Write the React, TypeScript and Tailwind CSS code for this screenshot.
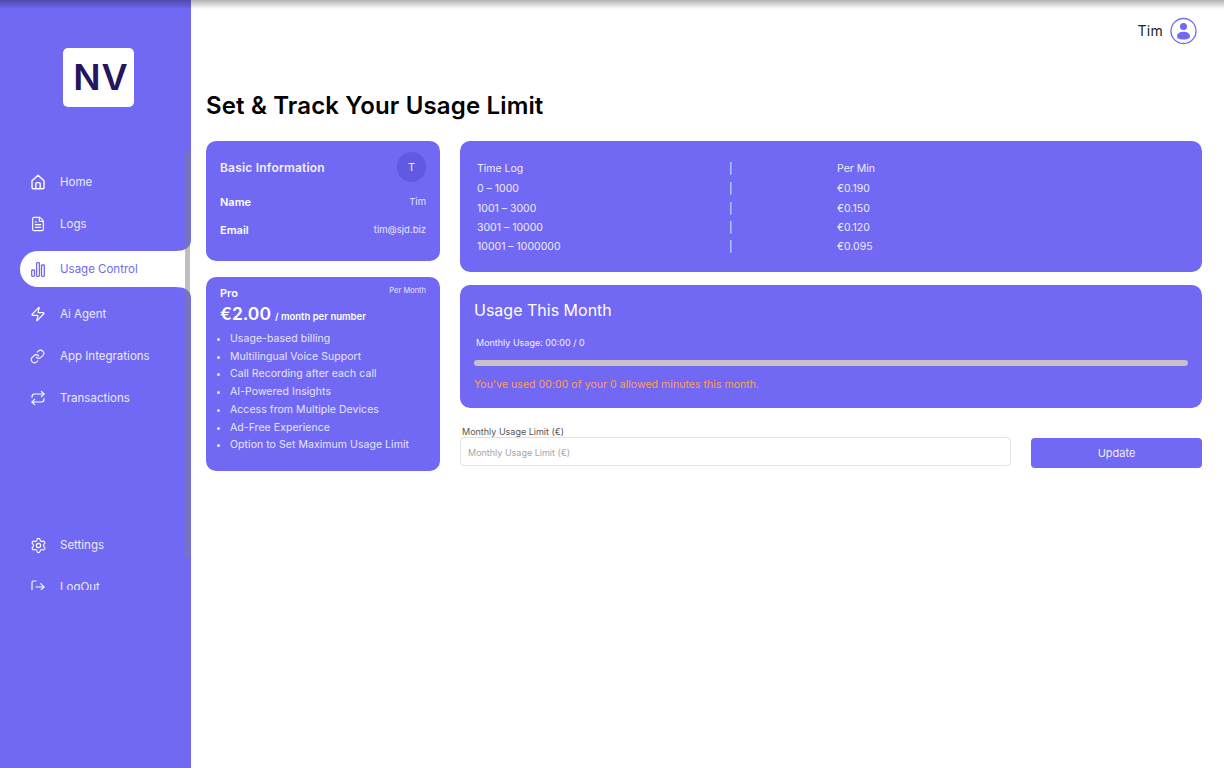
import { Zap, Link, Repeat, Settings, LogOut, FileText } from 'lucide-react';
import type { ReactNode } from 'react';

const fontStack = { fontFamily: 'Inter, "Noto Sans", sans-serif' };

function HomeIcon() {
  return (
    <svg width="16" height="16" viewBox="0 0 16 16" fill="none" stroke="currentColor" strokeWidth="1.4" strokeLinejoin="round">
      <path d="M2 6.8 8 1.2l6 5.6v6.6a1.3 1.3 0 0 1-1.3 1.3H3.300A1.300 1.300 0 0 1 2 13.400z" />
      <path d="M5.800 14.700V9.800a1.200 1.200 0 0 1 1.200-1.200h2a1.200 1.200 0 0 1 1.200 1.200v4.900" />
    </svg>
  );
}

function BarsIcon() {
  return (
    <svg width="14" height="15" viewBox="0 0 14 15" fill="none" stroke="currentColor" strokeWidth="1.3">
      <rect x="0.7" y="8" width="2.8" height="6.3" rx="0.7" />
      <rect x="5.6" y="0.7" width="2.8" height="13.6" rx="0.7" />
      <rect x="10.5" y="3" width="2.8" height="11.3" rx="0.7" />
    </svg>
  );
}

function UserBadge() {
  return (
    <svg width="27" height="28" viewBox="0 0 27 28" fill="none">
      <circle cx="13.5" cy="14" r="12.5" stroke="#7168f3" strokeWidth="1.3" />
      <circle cx="13.5" cy="9.6" r="3.5" fill="#7168f3" />
      <path d="M7 19.5c0-3 2.6-4.8 6.5-4.8s6.5 1.8 6.5 4.8c0 1.6-2 3-6.5 3S7 21.1 7 19.5z" fill="#7168f3" />
    </svg>
  );
}

function NavItem({ icon, label, className = '' }: { icon: ReactNode; label: string; className?: string }) {
  return (
    <div className={`flex h-[42px] items-center pl-[30px] text-[#eceafe] ${className}`}>
      <span className="flex w-[30px] items-center text-white">{icon}</span>
      <span className="pt-px text-[11.5px]">{label}</span>
    </div>
  );
}

const plans = [
  'Usage-based billing',
  'Multilingual Voice Support',
  'Call Recording after each call',
  'AI-Powered Insights',
  'Access from Multiple Devices',
  'Ad-Free Experience',
  'Option to Set Maximum Usage Limit',
];

const rates = [
  ['Time Log', 'Per Min'],
  ['0 – 1000', '€0.190'],
  ['1001 – 3000', '€0.150'],
  ['3001 – 10000', '€0.120'],
  ['10001 – 1000000', '€0.095'],
];

export default function App() {
  return (
    <div className="relative flex h-[768px] w-full overflow-hidden bg-white" style={fontStack}>
      {/* top shadow */}
      <div className="absolute inset-x-0 top-0 z-20 h-[9px] bg-gradient-to-b from-black/30 to-transparent" />

      {/* Sidebar */}
      <aside className="w-[191px] shrink-0 bg-[#7168f3] pt-[48px]">
        <div className="ml-[63px] flex h-[59px] w-[71px] items-center justify-center rounded-[5px] bg-white pb-[2px] pl-[5px]">
          <span className="text-[36px] font-semibold leading-none tracking-[1px] text-[#25145f]">NV</span>
        </div>

        <div className="relative mt-[44px] h-[439px] overflow-hidden pt-[10px]">
          <NavItem icon={<HomeIcon />} label="Home" />
          <NavItem icon={<FileText size={16} strokeWidth={1.7} />} label="Logs" />

          <div className="relative mb-[6px] ml-[20px] mt-[6px] flex h-[36px] items-center rounded-l-[18px] bg-white pl-[11px] text-[#7168f3]">
            <span className="flex w-[29px] items-center"><BarsIcon /></span>
            <span className="pt-[2px] text-[11.5px]">Usage Control</span>
            <svg className="absolute -top-[11px] right-0" width="16" height="11" viewBox="0 0 16 11">
              <path d="M16 0v11H0c9 0 16-3 16-11z" fill="#fff" />
            </svg>
            <svg className="absolute -bottom-[11px] right-0" width="16" height="11" viewBox="0 0 16 11">
              <path d="M16 11V0H0c9 0 16 3 16 11z" fill="#fff" />
            </svg>
          </div>

          <NavItem icon={<Zap size={16} strokeWidth={1.7} />} label="Ai Agent" />
          <NavItem icon={<Link size={15} strokeWidth={1.7} />} label="App Integrations" />
          <NavItem icon={<Repeat size={16} strokeWidth={1.7} />} label="Transactions" />
          <NavItem icon={<Settings size={17} strokeWidth={1.6} />} label="Settings" className="mt-[105px]" />
          <NavItem icon={<LogOut size={16} strokeWidth={1.7} />} label="LogOut" />

          {/* scrollbar thumb */}
          <div className="absolute right-px top-0 h-[406px] w-[5px] rounded-full bg-[#808080]/50" />
        </div>
      </aside>

      {/* Main */}
      <main className="flex-1 pl-[15px] pr-[22px]">
        <header className="flex h-[62px] items-center justify-end gap-[7px] pr-[5px]">
          <span className="pb-[2px] text-[14px] tracking-[0.3px] text-[#222]">Tim</span>
          <UserBadge />
        </header>

        <h1 className="mt-[29px] text-[24px] font-semibold leading-[30px] tracking-[0.15px] text-black">
          Set &amp; Track Your Usage Limit
        </h1>

        <div className="mt-[20px] flex gap-[20px]">
          {/* Left column */}
          <div className="flex w-[234px] shrink-0 flex-col gap-[16px] text-white">
            <section className="h-[120px] rounded-[10px] bg-[#7168f3] px-[14px] pt-[11px]">
              <div className="flex items-center justify-between">
                <span className="pt-px text-[12px] font-semibold tracking-[0.2px] text-[#f1f0fe]">Basic Information</span>
                <span className="flex h-[30px] w-[29px] items-center justify-center rounded-full bg-[#6259e3] text-[11px] text-[#e7e5fd]">T</span>
              </div>
              <div className="mt-[13px] flex items-center justify-between leading-[14px]">
                <span className="text-[11px] font-semibold">Name</span>
                <span className="text-[9.5px] text-[#e7e5fd]">Tim</span>
              </div>
              <div className="mt-[14px] flex items-center justify-between leading-[14px]">
                <span className="text-[11px] font-semibold">Email</span>
                <span className="text-[9.5px] text-[#e7e5fd]">tim@sjd.biz</span>
              </div>
            </section>

            <section className="relative h-[194px] rounded-[10px] bg-[#7168f3] px-[14px] pt-[9px]">
              <span className="absolute right-[14px] top-[8px] text-[7.5px] text-[#e7e5fd]">Per Month</span>
              <div className="text-[11px] font-semibold leading-[15px]">Pro</div>
              <div className="flex items-baseline gap-[4px] leading-[26px]">
                <span className="text-[17.5px] font-semibold">€2.00</span>
                <span className="text-[9.5px] font-semibold">/ month per number</span>
              </div>
              <ul className="list-disc pl-[10px] text-[10.5px] leading-[17.7px] tracking-[0.05px] text-[#e7e5fd]">
                {plans.map((p) => (
                  <li key={p}>{p}</li>
                ))}
              </ul>
            </section>
          </div>

          {/* Right column */}
          <div className="flex-1">
            <section className="h-[131px] rounded-[10px] bg-[#7168f3] px-[17px] pt-[18px] text-[10.5px] text-[#eeedfe]">
              {rates.map(([range, price], i) => (
                <div key={range} className={`flex h-[19.4px] items-center ${i === 0 ? 'mb-[1px]' : ''}`}>
                  <span className="w-[252px]">{range}</span>
                  <span className="w-[108px]">|</span>
                  <span>{price}</span>
                </div>
              ))}
            </section>

            <section className="mt-[13px] h-[123px] rounded-[10px] bg-[#7168f3] px-[14px] pt-[14px]">
              <h2 className="text-[16px] font-normal leading-[22px] text-white">Usage This Month</h2>
              <p className="ml-[2px] mt-[15px] text-[9px] leading-[14px] text-[#f1f0fe]">Monthly Usage: 00:00 / 0</p>
              <div className="mt-[10px] h-[6px] rounded-full bg-[#c8c2c8]" />
              <p className="mt-[11px] text-[10.5px] leading-[16px] tracking-[0.05px] text-[#ffa04f]">You've used 00:00 of your 0 allowed minutes this month.</p>
            </section>

            <div className="mt-[18px] flex items-end gap-[20px]">
              <div className="flex-1">
                <label className="ml-[2px] block text-[9px] leading-[11px] text-[#555]">Monthly Usage Limit (€)</label>
                <input
                  placeholder="Monthly Usage Limit (€)"
                  className="h-[29px] w-full rounded-[4px] border border-[#e2e2e4] bg-white px-[7px] pt-px text-[9px] outline-none placeholder:text-[#a5a5a8]"
                />
              </div>
              <button className="mb-[-2px] h-[30px] w-[171px] rounded-[4px] bg-[#7168f3] pt-px text-[11px] text-[#eeedfe]">Update</button>
            </div>
          </div>
        </div>
      </main>
    </div>
  );
}
